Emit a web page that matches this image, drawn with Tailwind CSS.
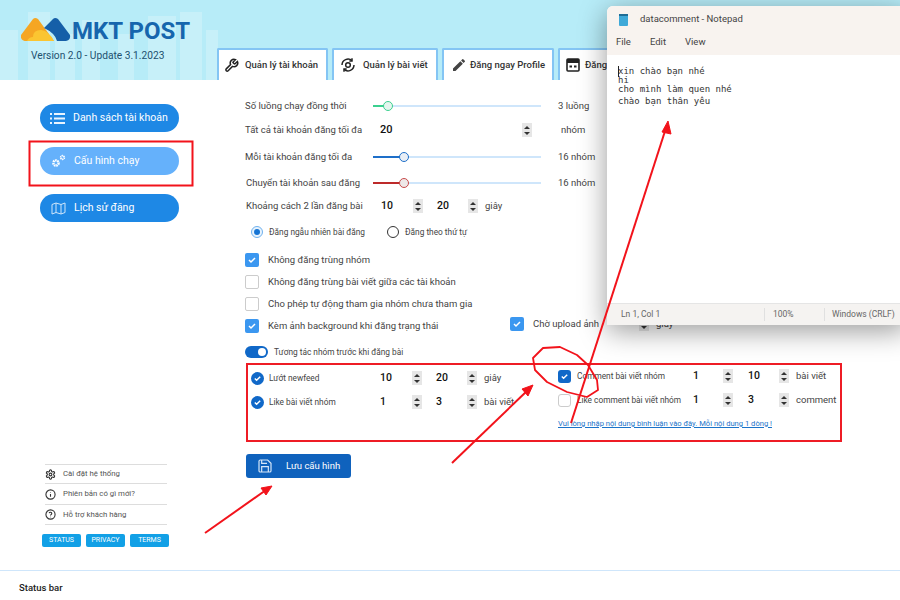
<!DOCTYPE html>
<html lang="vi">
<head>
<meta charset="UTF-8">
<title>MKT POST</title>
<script src="https://cdn.jsdelivr.net/npm/@tailwindcss/browser@4"></script>
</head>
<body class="relative w-[900px] h-[600px] overflow-hidden bg-white font-['Roboto',sans-serif] text-[#444]">

<!-- Header -->
<header class="relative flex items-end h-[80px] bg-[#b7ecf8] overflow-hidden">
  <svg class="absolute left-0 top-0" width="300" height="80" fill="#d2f3fb" opacity="0.6">
    <rect x="0" y="30" width="18" height="50"/><rect x="28" y="12" width="22" height="68"/><rect x="55" y="34" width="20" height="46"/>
    <rect x="82" y="20" width="18" height="60"/><rect x="118" y="34" width="16" height="46"/><rect x="148" y="16" width="28" height="64"/>
    <rect x="180" y="12" width="22" height="68"/><rect x="206" y="30" width="12" height="50"/>
  </svg>
  <div class="relative w-[217px] h-full shrink-0">
    <div class="flex items-center pl-[21px] pt-[16px] h-[43px]">
      <svg width="50" height="26" viewBox="0 0 50 26">
        <path d="M0 18 L12 2 Q14 0 17 2 L33 24 L6 24 Q-1 24 0 18Z" fill="#f5a623"/>
        <path d="M6 24 Q8 20 12 20 Q12 13 20 13 Q28 14 33 24Z" fill="#fbc531"/>
        <path d="M23 11 L32 2 Q34 0 37 2 L49 18 Q50 23 45 24 L36 24 Q34 16 23 11Z" fill="#155fa8"/>
      </svg>
      <span class="ml-[1px] mt-[3px] text-[24px] leading-none font-bold text-[#1666ad] whitespace-nowrap">MKT POST</span>
    </div>
    <p class="pl-[31px] mt-[5px] text-[10.2px] leading-[16px] text-[#22506f] whitespace-nowrap">Version 2.0 - Update 3.1.2023</p>
  </div>
  <nav class="relative flex gap-[4px] text-[9.5px] font-medium text-[#333]">
    <div class="flex items-center gap-[6px] w-[111px] h-[32px] pl-[5px] bg-white border-2 border-b-0 border-[#84c5f4] rounded-t-[2px]">
      <svg class="shrink-0" width="15" height="15" viewBox="0 0 24 24" fill="none" stroke="#222" stroke-width="2.4"><path d="M14.7 6.3a1 1 0 0 0 0 1.4l1.6 1.6a1 1 0 0 0 1.4 0l3.77-3.77a6 6 0 0 1-7.94 7.94l-6.91 6.91a2.12 2.12 0 0 1-3-3l6.91-6.91a6 6 0 0 1 7.94-7.94l-3.76 3.76z"/></svg>
      <span class="whitespace-nowrap">Quản lý tài khoản</span>
    </div>
    <div class="flex items-center gap-[7px] w-[106px] h-[32px] pl-[6px] bg-white border-2 border-b-0 border-[#84c5f4] rounded-t-[2px]">
      <svg class="shrink-0" width="16" height="16" viewBox="0 0 24 24" fill="none" stroke="#222" stroke-width="2.2"><circle cx="12" cy="12" r="3.5"/><path d="M3 12a9 9 0 0 1 15-6.5M21 12a9 9 0 0 1-15 6.5"/><path d="M18 2v4h-4M6 22v-4h4"/></svg>
      <span class="whitespace-nowrap">Quản lý bài viết</span>
    </div>
    <div class="flex items-center gap-[3px] w-[112px] h-[32px] pl-[7px] bg-white border-2 border-b-0 border-[#84c5f4] rounded-t-[2px]">
      <svg class="shrink-0" width="16" height="16" viewBox="0 0 24 24" fill="#444"><path d="M3 17.25V21h3.75L17.81 9.94l-3.75-3.75L3 17.25zM20.71 7.04a1 1 0 0 0 0-1.41l-2.34-2.34a1 1 0 0 0-1.41 0l-1.83 1.83 3.75 3.75 1.83-1.83z"/></svg>
      <span class="whitespace-nowrap">Đăng ngay Profile</span>
    </div>
    <div class="flex items-center gap-[5px] w-[110px] h-[32px] pl-[6px] bg-white border-2 border-b-0 border-[#84c5f4] rounded-t-[2px]">
      <svg class="shrink-0" width="14" height="14" viewBox="0 0 14 14"><rect x="1" y="1" width="12" height="12" rx="1" fill="none" stroke="#222" stroke-width="1.6"/><rect x="1" y="1" width="12" height="4" fill="#222"/><rect x="3.5" y="7.5" width="2.5" height="2" fill="#222"/><rect x="8" y="7.5" width="2.5" height="2" fill="#222"/></svg>
      <span class="whitespace-nowrap">Đăng</span>
    </div>
  </nav>
</header>

<main class="flex h-[490px]">
  <!-- Sidebar -->
  <aside class="flex flex-col w-[245px] shrink-0 pl-[40px] pt-[24px] text-white text-[10.5px]">
    <div class="flex items-center w-[139px] h-[28px] pl-[10px] gap-[8px] rounded-full bg-[#1e88e5]">
      <svg width="15" height="13" viewBox="0 0 15 13" fill="#e8f4ff"><rect x="0" y="1" width="2" height="2"/><rect x="4" y="1" width="11" height="2"/><rect x="0" y="5.5" width="2" height="2"/><rect x="4" y="5.5" width="11" height="2"/><rect x="0" y="10" width="2" height="2"/><rect x="4" y="10" width="11" height="2"/></svg>
      <span class="whitespace-nowrap">Danh sách tài khoản</span>
    </div>
    <div class="flex items-center w-[139px] h-[28px] mt-[15px] pl-[11px] gap-[8px] rounded-full bg-[#65b1fb]">
      <svg width="15" height="14" viewBox="0 0 15 14" fill="none" stroke="#fff"><circle cx="5" cy="9" r="2.6" stroke-width="2.4" stroke-dasharray="1.6 0.6"/><circle cx="11.5" cy="3.5" r="1.8" stroke-width="1.8" stroke-dasharray="1.2 0.5"/></svg>
      <span class="whitespace-nowrap">Cấu hình chạy</span>
    </div>
    <div class="flex items-center w-[139px] h-[28px] mt-[19px] pl-[11px] gap-[8px] rounded-full bg-[#1e88e5]">
      <svg width="15" height="13" viewBox="0 0 15 13" fill="none" stroke="#cfe6fb"><path d="M1 2.5 L5 1 L10 2.5 L14 1 V10.5 L10 12 L5 10.5 L1 12Z M5 1 V10.5 M10 2.5 V12"/></svg>
      <span class="whitespace-nowrap">Lịch sử đăng</span>
    </div>

    <div class="mt-[242px] w-[122px] ml-[5px] text-[7.8px] text-[#555]">
      <div class="flex items-center gap-[7px] h-[20px] border-y border-[#ddd]">
        <svg width="11" height="11" viewBox="0 0 24 24" fill="none" stroke="#333" stroke-width="2.4"><path d="M12.22 2h-.44a2 2 0 0 0-2 2v.18a2 2 0 0 1-1 1.73l-.43.25a2 2 0 0 1-2 0l-.15-.08a2 2 0 0 0-2.73.73l-.22.38a2 2 0 0 0 .73 2.73l.15.1a2 2 0 0 1 1 1.72v.51a2 2 0 0 1-1 1.74l-.15.09a2 2 0 0 0-.73 2.73l.22.38a2 2 0 0 0 2.73.73l.15-.08a2 2 0 0 1 2 0l.43.25a2 2 0 0 1 1 1.73V20a2 2 0 0 0 2 2h.44a2 2 0 0 0 2-2v-.18a2 2 0 0 1 1-1.73l.43-.25a2 2 0 0 1 2 0l.15.08a2 2 0 0 0 2.73-.73l.22-.39a2 2 0 0 0-.73-2.73l-.15-.08a2 2 0 0 1-1-1.74v-.5a2 2 0 0 1 1-1.74l.15-.09a2 2 0 0 0 .73-2.73l-.22-.38a2 2 0 0 0-2.73-.73l-.15.08a2 2 0 0 1-2 0l-.43-.25a2 2 0 0 1-1-1.73V4a2 2 0 0 0-2-2z"/><circle cx="12" cy="12" r="3"/></svg>
        <span>Cài đặt hệ thống</span>
      </div>
      <div class="flex items-center gap-[7px] h-[21px] border-b border-[#ddd]">
        <svg width="11" height="11" viewBox="0 0 24 24" fill="none" stroke="#333" stroke-width="2.4"><circle cx="12" cy="12" r="10"/><path d="M12 11v6M12 7v1"/></svg>
        <span>Phiên bản có gì mới?</span>
      </div>
      <div class="flex items-center gap-[7px] h-[20px] border-b border-[#ddd]">
        <svg width="11" height="11" viewBox="0 0 24 24" fill="none" stroke="#333" stroke-width="2.4"><circle cx="12" cy="12" r="10"/><path d="M9 9a3 3 0 0 1 5.8 1c0 2-2.8 2.5-2.8 4M12 17v1"/></svg>
        <span>Hỗ trợ khách hàng</span>
      </div>
    </div>
    <div class="flex gap-[5px] mt-[9px] ml-[2px] text-[7px] text-white">
      <span class="flex items-center justify-center w-[39px] h-[13px] bg-[#12a0e6] rounded-[2px]">STATUS</span>
      <span class="flex items-center justify-center w-[39px] h-[13px] bg-[#12a0e6] rounded-[2px]">PRIVACY</span>
      <span class="flex items-center justify-center w-[39px] h-[13px] bg-[#12a0e6] rounded-[2px]">TERMS</span>
    </div>
  </aside>

  <!-- Config form -->
  <section class="w-[600px] text-[9.5px]">
    <div class="flex items-center h-[14px] mt-[19px]">
      <span class="w-[128px] whitespace-nowrap">Số luồng chạy đồng thời</span>
      <div class="relative w-[168px] h-[2px] bg-[#cfe6fb]"><div class="w-[13px] h-full bg-[#3bd08f]"></div><div class="absolute left-[10px] top-[-4px] w-[10px] h-[10px] rounded-full bg-[#e5f5ee] border border-[#3bd08f]"></div></div>
      <span class="ml-[17px] whitespace-nowrap">3 luồng</span>
    </div>
    <div class="flex items-center h-[16px] mt-[9px]">
      <span class="w-[135px] whitespace-nowrap">Tất cả tài khoản đăng tối đa</span>
      <b class="w-[142px] text-[11px] font-medium text-[#111]">20</b>
      <div class="flex flex-col items-center justify-center gap-[3px] w-[10px] h-[14px] bg-[#e6e6e6]"><i class="border-x-[3px] border-b-[3px] border-x-transparent border-b-[#333]"></i><i class="border-x-[3px] border-t-[3px] border-x-transparent border-t-[#333]"></i></div>
      <span class="ml-[29px] whitespace-nowrap">nhóm</span>
    </div>
    <div class="flex items-center h-[14px] mt-[12px]">
      <span class="w-[128px] whitespace-nowrap">Mỗi tài khoản đăng tối đa</span>
      <div class="relative w-[168px] h-[2px] bg-[#cfe6fb]"><div class="w-[27px] h-full bg-[#1e6fc9]"></div><div class="absolute left-[26px] top-[-4px] w-[10px] h-[10px] rounded-full bg-[#e9eef5] border border-[#1e6fc9]"></div></div>
      <span class="ml-[17px] whitespace-nowrap">16 nhóm</span>
    </div>
    <div class="flex items-center h-[14px] mt-[12px]">
      <span class="w-[128px] pl-[1px] whitespace-nowrap">Chuyển tài khoản sau đăng</span>
      <div class="relative w-[168px] h-[2px] bg-[#cfe6fb]"><div class="w-[27px] h-full bg-[#bd2a2a]"></div><div class="absolute left-[26px] top-[-4px] w-[10px] h-[10px] rounded-full bg-[#eee8e8] border border-[#c84a4a]"></div></div>
      <span class="ml-[17px] whitespace-nowrap">16 nhóm</span>
    </div>
    <div class="flex items-center h-[16px] mt-[8px]">
      <span class="w-[136px] pl-[1px] whitespace-nowrap">Khoảng cách 2 lần đăng bài</span>
      <b class="w-[32px] text-[10.5px] font-medium text-[#111]">10</b>
      <div class="flex flex-col items-center justify-center gap-[3px] w-[10px] h-[14px] bg-[#e6e6e6]"><i class="border-x-[3px] border-b-[3px] border-x-transparent border-b-[#333]"></i><i class="border-x-[3px] border-t-[3px] border-x-transparent border-t-[#333]"></i></div>
      <b class="w-[31px] ml-[14px] text-[10.5px] font-medium text-[#111]">20</b>
      <div class="flex flex-col items-center justify-center gap-[3px] w-[10px] h-[14px] bg-[#e6e6e6]"><i class="border-x-[3px] border-b-[3px] border-x-transparent border-b-[#333]"></i><i class="border-x-[3px] border-t-[3px] border-x-transparent border-t-[#333]"></i></div>
      <span class="ml-[7px]">giây</span>
    </div>

    <div class="flex items-center h-[14px] mt-[11px] pl-[6px] text-[8.3px]">
      <span class="flex items-center justify-center w-[12px] h-[12px] rounded-full border border-[#6fb1ee] bg-[#e8f3fd]"><i class="w-[6px] h-[6px] rounded-full bg-[#1574d4]"></i></span>
      <span class="w-[118px] ml-[6px] whitespace-nowrap">Đăng ngẫu nhiên bài đăng</span>
      <span class="w-[12px] h-[12px] rounded-full border border-[#333]"></span>
      <span class="ml-[6px] whitespace-nowrap">Đăng theo thứ tự</span>
    </div>

    <div class="flex items-center h-[22px] mt-[10px]">
      <span class="flex items-center justify-center w-[14px] h-[14px] rounded-[2px] bg-[#3b97f0]"><svg width="10" height="10" viewBox="0 0 10 10" fill="none" stroke="#fff" stroke-width="1.5"><path d="M2 5l2 2 4-4"/></svg></span>
      <span class="ml-[9px]">Không đăng trùng nhóm</span>
    </div>
    <div class="flex items-center h-[22px]">
      <span class="w-[14px] h-[14px] rounded-[2px] border border-[#ccc]"></span>
      <span class="ml-[9px]">Không đăng trùng bài viết giữa các tài khoản</span>
    </div>
    <div class="flex items-center h-[22px]">
      <span class="w-[14px] h-[14px] rounded-[2px] border border-[#ccc]"></span>
      <span class="ml-[9px]">Cho phép tự động tham gia nhóm chưa tham gia</span>
    </div>
    <div class="flex items-center h-[22px]">
      <span class="flex items-center justify-center w-[14px] h-[14px] rounded-[2px] bg-[#3b97f0]"><svg width="10" height="10" viewBox="0 0 10 10" fill="none" stroke="#fff" stroke-width="1.5"><path d="M2 5l2 2 4-4"/></svg></span>
      <span class="w-[242px] ml-[9px] whitespace-nowrap">Kèm ảnh background khi đăng trạng thái</span>
      <span class="flex items-center justify-center w-[14px] h-[14px] mt-[-4px] rounded-[2px] bg-[#3b97f0]"><svg width="10" height="10" viewBox="0 0 10 10" fill="none" stroke="#fff" stroke-width="1.5"><path d="M2 5l2 2 4-4"/></svg></span>
      <span class="ml-[9px] mt-[-4px] w-[106px] whitespace-nowrap">Chờ upload ảnh</span>
      <div class="flex flex-col items-center justify-center gap-[3px] w-[10px] h-[14px] mt-[-4px] bg-[#e6e6e6]"><i class="border-x-[3px] border-b-[3px] border-x-transparent border-b-[#333]"></i><i class="border-x-[3px] border-t-[3px] border-x-transparent border-t-[#333]"></i></div>
      <span class="mt-[-4px] ml-[7px]">giây</span>
    </div>

    <div class="flex items-center h-[14px] mt-[8px] text-[8.3px]">
      <span class="flex items-center justify-end w-[23px] h-[12px] pr-[2px] rounded-full bg-[#1068c8]"><i class="w-[8px] h-[8px] rounded-full bg-white"></i></span>
      <span class="ml-[6px] whitespace-nowrap">Tương tác nhóm trước khi đăng bài</span>
    </div>

    <!-- Interaction box -->
    <div class="flex w-[596px] h-[79px] mt-[4px] ml-[1px] border-2 border-[#ee1c25] text-[8.3px]">
      <div class="w-[309px] pl-[3px] pt-[5px]">
        <div class="flex items-center h-[16px]">
          <span class="flex items-center justify-center w-[13px] h-[13px] rounded-full bg-[#1068c8]"><svg width="9" height="9" viewBox="0 0 10 10" fill="none" stroke="#fff" stroke-width="1.6"><path d="M2 5l2 2 4-4"/></svg></span>
          <span class="w-[111px] ml-[5px] whitespace-nowrap">Lướt newfeed</span>
          <b class="w-[32px] text-[10.5px] font-medium text-[#111]">10</b>
          <div class="flex flex-col items-center justify-center gap-[3px] w-[10px] h-[14px] bg-[#e6e6e6]"><i class="border-x-[3px] border-b-[3px] border-x-transparent border-b-[#333]"></i><i class="border-x-[3px] border-t-[3px] border-x-transparent border-t-[#333]"></i></div>
          <b class="w-[31px] ml-[14px] text-[10.5px] font-medium text-[#111]">20</b>
          <div class="flex flex-col items-center justify-center gap-[3px] w-[10px] h-[14px] bg-[#e6e6e6]"><i class="border-x-[3px] border-b-[3px] border-x-transparent border-b-[#333]"></i><i class="border-x-[3px] border-t-[3px] border-x-transparent border-t-[#333]"></i></div>
          <span class="ml-[7px] text-[9.5px]">giây</span>
        </div>
        <div class="flex items-center h-[16px] mt-[8px]">
          <span class="flex items-center justify-center w-[13px] h-[13px] rounded-full bg-[#1068c8]"><svg width="9" height="9" viewBox="0 0 10 10" fill="none" stroke="#fff" stroke-width="1.6"><path d="M2 5l2 2 4-4"/></svg></span>
          <span class="w-[111px] ml-[5px] whitespace-nowrap">Like bài viết nhóm</span>
          <b class="w-[32px] text-[10.5px] font-medium text-[#111]">1</b>
          <div class="flex flex-col items-center justify-center gap-[3px] w-[10px] h-[14px] bg-[#e6e6e6]"><i class="border-x-[3px] border-b-[3px] border-x-transparent border-b-[#333]"></i><i class="border-x-[3px] border-t-[3px] border-x-transparent border-t-[#333]"></i></div>
          <b class="w-[31px] ml-[14px] text-[10.5px] font-medium text-[#111]">3</b>
          <div class="flex flex-col items-center justify-center gap-[3px] w-[10px] h-[14px] bg-[#e6e6e6]"><i class="border-x-[3px] border-b-[3px] border-x-transparent border-b-[#333]"></i><i class="border-x-[3px] border-t-[3px] border-x-transparent border-t-[#333]"></i></div>
          <span class="ml-[7px] text-[9.5px] whitespace-nowrap">bài viết</span>
        </div>
      </div>
      <div class="pt-[3px] pl-[1px]">
        <div class="flex items-center h-[16px]">
          <span class="flex items-center justify-center w-[13px] h-[13px] rounded-[3px] bg-[#1068c8]"><svg width="9" height="9" viewBox="0 0 10 10" fill="none" stroke="#fff" stroke-width="1.6"><path d="M2 5l2 2 4-4"/></svg></span>
          <span class="w-[116px] ml-[6px] whitespace-nowrap">Comment bài viết nhóm</span>
          <b class="w-[30px] text-[10.5px] font-medium text-[#111]">1</b>
          <div class="flex flex-col items-center justify-center gap-[3px] w-[10px] h-[14px] bg-[#e6e6e6]"><i class="border-x-[3px] border-b-[3px] border-x-transparent border-b-[#333]"></i><i class="border-x-[3px] border-t-[3px] border-x-transparent border-t-[#333]"></i></div>
          <b class="w-[31px] ml-[15px] text-[10.5px] font-medium text-[#111]">10</b>
          <div class="flex flex-col items-center justify-center gap-[3px] w-[10px] h-[14px] bg-[#e6e6e6]"><i class="border-x-[3px] border-b-[3px] border-x-transparent border-b-[#333]"></i><i class="border-x-[3px] border-t-[3px] border-x-transparent border-t-[#333]"></i></div>
          <span class="ml-[7px] text-[9.5px] whitespace-nowrap">bài viết</span>
        </div>
        <div class="flex items-center h-[16px] mt-[8px]">
          <span class="w-[13px] h-[13px] rounded-[3px] border border-[#ccc]"></span>
          <span class="w-[116px] ml-[6px] whitespace-nowrap">Like comment bài viết nhóm</span>
          <b class="w-[30px] text-[10.5px] font-medium text-[#111]">1</b>
          <div class="flex flex-col items-center justify-center gap-[3px] w-[10px] h-[14px] bg-[#e6e6e6]"><i class="border-x-[3px] border-b-[3px] border-x-transparent border-b-[#333]"></i><i class="border-x-[3px] border-t-[3px] border-x-transparent border-t-[#333]"></i></div>
          <b class="w-[31px] ml-[15px] text-[10.5px] font-medium text-[#111]">3</b>
          <div class="flex flex-col items-center justify-center gap-[3px] w-[10px] h-[14px] bg-[#e6e6e6]"><i class="border-x-[3px] border-b-[3px] border-x-transparent border-b-[#333]"></i><i class="border-x-[3px] border-t-[3px] border-x-transparent border-t-[#333]"></i></div>
          <span class="ml-[7px] text-[9.5px] whitespace-nowrap">comment</span>
        </div>
        <a class="block mt-[10px] text-[7.6px] leading-[11px] text-[#1a73c9] underline whitespace-nowrap">Vui lòng nhập nội dung bình luận vào đây. Mỗi nội dung 1 dòng !</a>
      </div>
    </div>

    <button class="flex items-center w-[105px] h-[24px] mt-[12px] ml-[1px] pl-[11px] gap-[13px] rounded-[3px] bg-[#0f62bd] text-[9.5px] text-white">
      <svg width="16" height="16" viewBox="0 0 24 24" fill="none" stroke="#d5e6f8" stroke-width="1.8"><path d="M19 21H5a2 2 0 0 1-2-2V5a2 2 0 0 1 2-2h11l5 5v11a2 2 0 0 1-2 2z"/><path d="M17 21v-8H7v8M7 3v5h8"/></svg>
      <span class="whitespace-nowrap">Lưu cấu hình</span>
    </button>
  </section>
</main>

<footer class="h-[30px] pl-[19px] pt-[10px] border-t border-[#cfe6fb] text-[9.5px] leading-[14px] font-medium text-[#222]">Status bar</footer>

<!-- Notepad window on top of the app -->
<div class="absolute left-[607px] top-[6px] flex flex-col w-[300px] h-[319px] rounded-tl-[6px] bg-white shadow-[0_6px_28px_rgba(0,0,0,0.4)] overflow-hidden">
  <div class="h-[49px] shrink-0 bg-[#f8f3ef] text-[#444]">
    <div class="flex items-center h-[24px] pl-[12px] pt-[3px] text-[9.5px]">
      <svg width="9" height="12" viewBox="0 0 9 12"><rect width="9" height="12" rx="1" fill="#3fa9d8"/><rect y="0" width="9" height="2" fill="#1f6d96"/></svg>
      <span class="ml-[12px]">datacomment - Notepad</span>
    </div>
    <div class="flex gap-[19px] pl-[9px] pt-[5px] text-[9.5px]">
      <span>File</span><span>Edit</span><span>View</span>
    </div>
  </div>
  <div class="relative flex-1 pl-[11px] pt-[12px] font-['DejaVu_Sans_Mono',monospace] text-[9px] leading-[9px] text-[#333]">
    <i class="absolute left-[11px] top-[11px] w-[1px] h-[11px] bg-[#222]"></i>
    <p>xin chào bạn nhé</p>
    <p>hi</p>
    <p>cho mình làm quen nhé</p>
    <p class="mt-[3px]">chào bạn thân yêu</p>
  </div>
  <div class="flex items-center h-[22px] shrink-0 bg-[#f5f3f1] border-t border-[#e5e5e5] text-[8.5px] text-[#666]">
    <span class="w-[157px] pl-[14px]">Ln 1, Col 1</span>
    <span class="w-[60px] pl-[8px] border-l border-[#e0e0e0]">100%</span>
    <span class="pl-[7px] border-l border-[#e0e0e0] whitespace-nowrap">Windows (CRLF)</span>
  </div>
</div>

<!-- Red hand-drawn annotations -->
<svg class="absolute left-0 top-0" width="900" height="600" fill="none" stroke="#f2131b">
  <rect x="29.5" y="141.5" width="163" height="44" stroke-width="2"/>
  <path d="M205 533 L266 490" stroke-width="2"/>
  <path d="M272 486 L261 488 L266 495Z" fill="#f2131b" stroke-width="1"/>
  <path d="M452 463 L528 390" stroke-width="2"/>
  <path d="M533 385 L522 389 L528 396Z" fill="#f2131b" stroke-width="1"/>
  <path d="M571 423 L666 128" stroke-width="2"/>
  <path d="M668 121 L662 132 L671 134Z" fill="#f2131b" stroke-width="1"/>
  <path d="M588 365 L577 355 L560 347 L543 348 L533 358 L535 370 L547 382 L567 392 L587 397 L598 390 L597 380 L588 365" stroke-width="1.8" stroke-linejoin="round"/>
</svg>

</body>
</html>
